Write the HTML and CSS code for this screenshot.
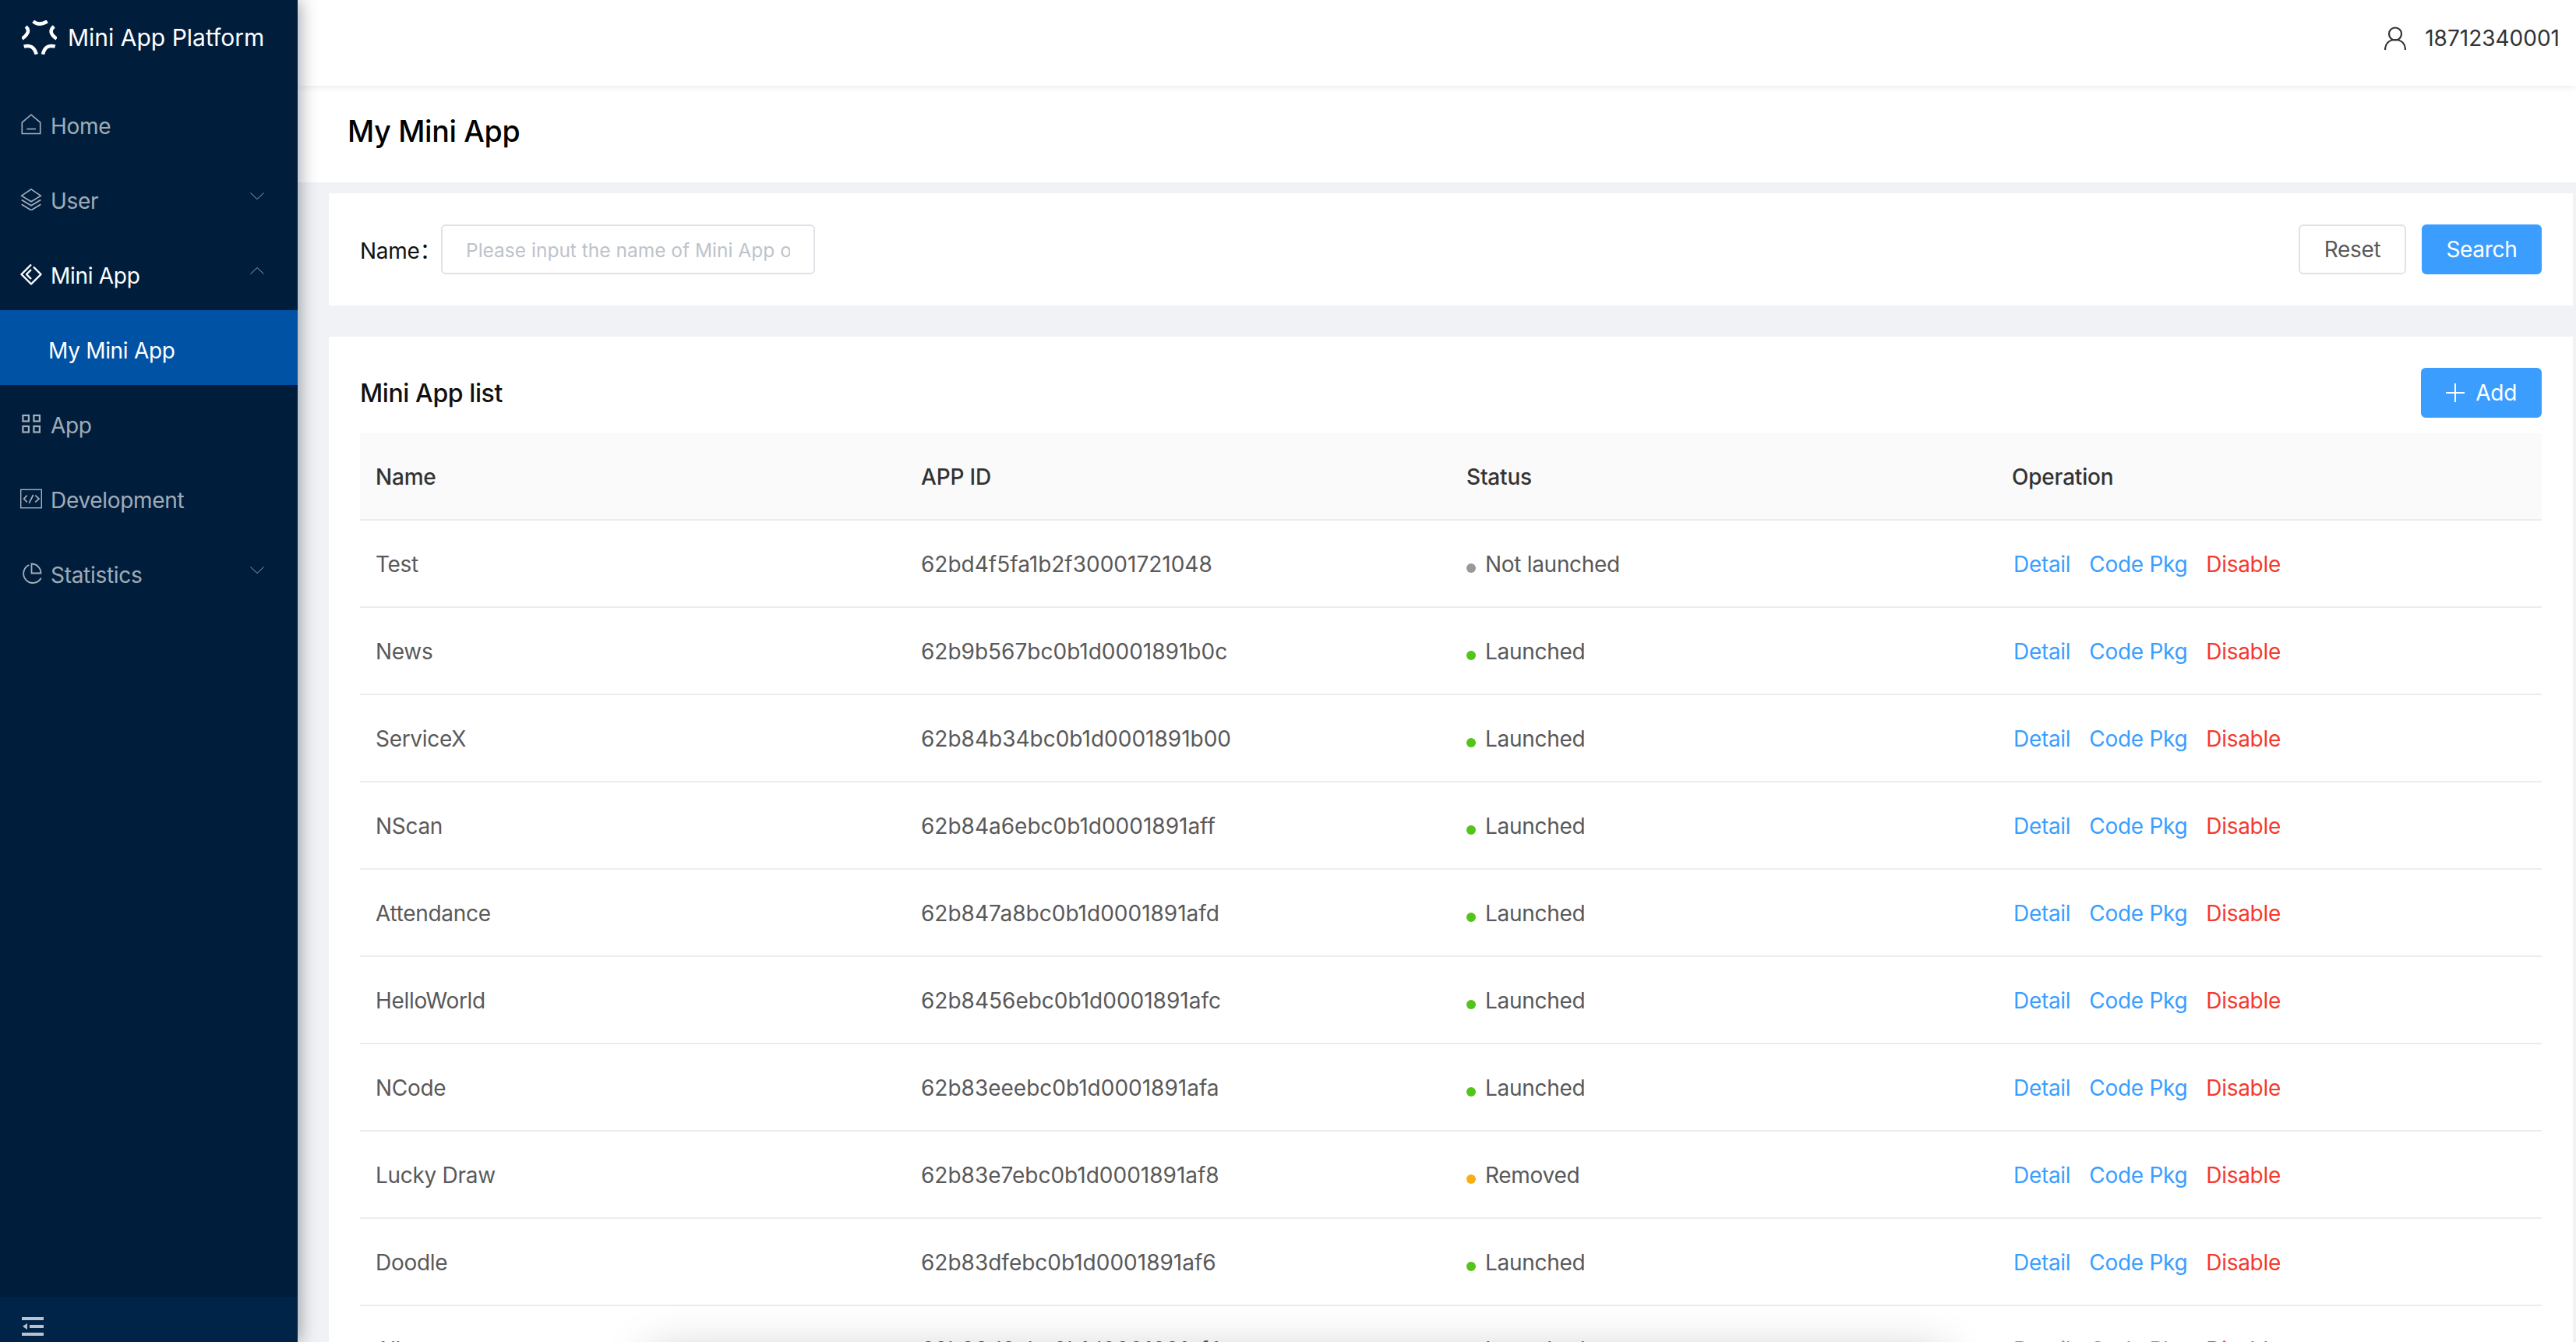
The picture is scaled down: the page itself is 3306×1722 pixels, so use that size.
FILE: index.html
```html
<!DOCTYPE html>
<html lang="en">
<head>
<meta charset="utf-8">
<title>Mini App Platform</title>
<link rel="stylesheet" href="styles.css">
</head>
<body>
<div class="app">
  <aside class="sider">
    <div class="logo">
      <svg class="logo-icon" viewBox="0 0 45 44" fill="none" stroke="#fff" stroke-width="4.500"><path d="M14.700 1.300Q22 8 32.700 1.300"/><path d="M41.300 8Q32.500 15 44.700 23.700"/><path d="M5.300 8Q12.500 15 .3 23.700"/><path d="M2.700 33.700Q15 30 18.700 43.700"/><path d="M42.700 33.700Q30 30 27 43.700"/></svg>
      <span>Mini App Platform</span>
    </div>
    <nav class="menu">
      <a class="item"><svg class="ic" viewBox="0 0 28 28" fill="none" stroke="currentColor" stroke-width="1.600"><path d="M2.300 25.500V11.200L14 1.200l11.700 10v14.300z"/><path d="M8.300 19.500H20"/></svg><span class="label">Home</span></a>
      <a class="item"><svg class="ic" viewBox="0 0 28 28" fill="none" stroke="currentColor" stroke-width="1.600"><path d="M14 .8 26.300 9.200 14 16.800 1.700 9.200z"/><path d="M1.700 14.500 14 21.800l12.300-7.300"/><path d="M1.700 20.200 14 27.800l12.300-7.600"/></svg><span class="label">User</span><svg class="chev" viewBox="0 0 18 9" fill="none" stroke="currentColor" stroke-width="1"><path d="M.5.5 9 8.500 17.500.5"/></svg></a>
      <a class="item open"><svg class="ic" viewBox="0 0 28 28" fill="none" stroke="currentColor" stroke-width="2.400" stroke-linejoin="round"><path d="M14 1.500 1.500 14 14 26.500 26.500 14 17 4.500"/><path d="M14 8 8 14l6 6"/></svg><span class="label">Mini App</span><svg class="chev" viewBox="0 0 18 9" fill="none" stroke="currentColor" stroke-width="1"><path d="M.5 8.500 9 .5l8.500 8"/></svg></a>
      <a class="item sub"><span class="label">My Mini App</span></a>
      <a class="item"><svg class="ic" viewBox="0 0 28 28" fill="none" stroke="currentColor" stroke-width="2.200"><rect x="3.400" y="3" width="7.500" height="7.500"/><rect x="17.400" y="3" width="7.500" height="7.500"/><rect x="3.400" y="17" width="7.500" height="7.500"/><rect x="17.400" y="17" width="7.500" height="7.500"/></svg><span class="label">App</span></a>
      <a class="item"><svg class="ic" viewBox="0 0 28 28" fill="none" stroke="currentColor" stroke-width="1.400"><rect x=".7" y="2.300" width="26.600" height="23.400"/><path d="M8.700 9.600 4.700 14l4 4.300M19.300 9.600l4.700 4.400-4.700 4.300M16.700 9l-5.400 10.700" stroke-width="1.700"/></svg><span class="label">Development</span></a>
      <a class="item"><svg class="ic" viewBox="0 0 28 28" fill="none" stroke="currentColor" stroke-width="1.800"><path d="M11.300 3A12 12 0 1 0 26.700 19.700"/><path d="M14.500 1.500V13.500H26.500A12 12 0 0 0 14.500 1.500z"/></svg><span class="label">Statistics</span><svg class="chev" viewBox="0 0 18 9" fill="none" stroke="currentColor" stroke-width="1"><path d="M.5.5 9 8.500 17.500.5"/></svg></a>
    </nav>
    <div class="collapse">
      <svg class="collapse-ic" viewBox="0 0 28 24" fill="#b9c2ce"><rect width="28" height="4"/><rect x="10" y="10" width="18" height="4"/><path d="M7 8v8l-6-4z"/><rect y="20" width="28" height="4"/></svg>
    </div>
  </aside>
  <div class="main">
    <header class="topbar">
      <svg class="user-ic" viewBox="0 0 28 30" fill="none" stroke="#333" stroke-width="2.200"><circle cx="14" cy="9.500" r="8"/><path d="M1 30c0-8 5-13 13-13s13 5 13 13"/></svg>
      <span class="phone">18712340001</span>
    </header>
    <div class="page-head"><h1>My Mini App</h1></div>
    <div class="content">
      <section class="card search">
        <label class="field-label">Name：</label>
        <input class="input" placeholder="Please input the name of Mini App or APP ID">
        <div class="grow"></div>
        <button class="btn reset">Reset</button>
        <button class="btn primary">Search</button>
      </section>
      <section class="card list">
        <div class="list-head">
          <h2>Mini App list</h2>
          <button class="btn primary add"><svg class="plus" viewBox="0 0 24 24" fill="none" stroke="#fff" stroke-width="2"><path d="M12 0v24M0 12h24"/></svg>Add</button>
        </div>
        <table class="table">
          <colgroup><col class="c"><col class="c"><col class="c"><col class="c"></colgroup>
          <thead><tr><th>Name</th><th>APP ID</th><th>Status</th><th>Operation</th></tr></thead>
          <tbody>
            <tr><td>Test</td><td class="id">62bd4f5fa1b2f30001721048</td><td><i class="dot gray"></i>Not launched</td><td class="ops"><a>Detail</a><a>Code Pkg</a><a class="danger">Disable</a></td></tr>
            <tr><td>News</td><td class="id">62b9b567bc0b1d0001891b0c</td><td><i class="dot green"></i>Launched</td><td class="ops"><a>Detail</a><a>Code Pkg</a><a class="danger">Disable</a></td></tr>
            <tr><td>ServiceX</td><td class="id">62b84b34bc0b1d0001891b00</td><td><i class="dot green"></i>Launched</td><td class="ops"><a>Detail</a><a>Code Pkg</a><a class="danger">Disable</a></td></tr>
            <tr><td>NScan</td><td class="id">62b84a6ebc0b1d0001891aff</td><td><i class="dot green"></i>Launched</td><td class="ops"><a>Detail</a><a>Code Pkg</a><a class="danger">Disable</a></td></tr>
            <tr><td>Attendance</td><td class="id">62b847a8bc0b1d0001891afd</td><td><i class="dot green"></i>Launched</td><td class="ops"><a>Detail</a><a>Code Pkg</a><a class="danger">Disable</a></td></tr>
            <tr><td>HelloWorld</td><td class="id">62b8456ebc0b1d0001891afc</td><td><i class="dot green"></i>Launched</td><td class="ops"><a>Detail</a><a>Code Pkg</a><a class="danger">Disable</a></td></tr>
            <tr><td>NCode</td><td class="id">62b83eeebc0b1d0001891afa</td><td><i class="dot green"></i>Launched</td><td class="ops"><a>Detail</a><a>Code Pkg</a><a class="danger">Disable</a></td></tr>
            <tr><td>Lucky Draw</td><td class="id">62b83e7ebc0b1d0001891af8</td><td><i class="dot orange"></i>Removed</td><td class="ops"><a>Detail</a><a>Code Pkg</a><a class="danger">Disable</a></td></tr>
            <tr><td>Doodle</td><td class="id">62b83dfebc0b1d0001891af6</td><td><i class="dot green"></i>Launched</td><td class="ops"><a>Detail</a><a>Code Pkg</a><a class="danger">Disable</a></td></tr>
            <tr><td>Album</td><td class="id">62b83d6cbc0b1d0001891af4</td><td><i class="dot green"></i>Launched</td><td class="ops"><a>Detail</a><a>Code Pkg</a><a class="danger">Disable</a></td></tr>
          </tbody>
        </table>
      </section>
    </div>
  </div>
  <div class="bottom-shade"></div>
</div>
</body>
</html>
```
FILE: styles.css
```css
* { box-sizing: border-box; }
html, body { margin: 0; height: 100%; overflow: hidden; }
body { font-family: Inter, "Noto Sans CJK SC", "Liberation Sans", sans-serif; font-size: 28px; letter-spacing: -.3px; color: #595959; background: #f0f2f5; }
.app { position: relative; display: flex; height: 1722px; overflow: hidden; }

.sider { width: 382px; flex: none; display: flex; flex-direction: column; background: #001e3c; box-shadow: 4px 0 20px rgba(0, 21, 41, .35); position: relative; z-index: 2; }
.logo { height: 96px; flex: none; display: flex; align-items: center; gap: 14px; padding-left: 28px; color: #fff; font-size: 30px; letter-spacing: 0; }
.logo-icon { width: 45px; height: 44px; flex: none; }
.menu { flex: 1; padding-top: 14px; }
.item { height: 96px; display: flex; align-items: center; padding: 0 43px 0 26px; color: rgba(255, 255, 255, .65); }
.ic { width: 28px; height: 28px; flex: none; margin: 3px 11px 0 0; }
.label { flex: 1; padding-top: 8px; }
.chev { width: 18px; height: 9px; flex: none; margin-top: -5px; color: rgba(255, 255, 255, .6); }
.item.open { color: #fff; }
.item.sub { background: #0052a5; color: #fff; padding-left: 62px; }
.collapse { height: 58px; flex: none; background: #002447; display: flex; align-items: center; padding-left: 28px; }
.collapse-ic { width: 28px; height: 24px; margin-top: 18px; }

.main { flex: 1; min-width: 0; display: flex; flex-direction: column; }
.topbar { height: 110px; flex: none; padding: 0 21px 12px 0; background: #fff; display: flex; align-items: center; justify-content: flex-end; color: #333; box-shadow: 0 2px 8px rgba(0, 21, 41, .08); position: relative; z-index: 1; }
.user-ic { width: 28px; height: 30px; margin-right: 24px; }
.phone { letter-spacing: 0; }
.page-head { height: 124px; flex: none; padding: 0 0 8px 64px; background: #fff; display: flex; align-items: center; }
h1 { margin: 0; font-size: 37.500px; font-weight: 500; color: #000; }
.content { flex: 1; padding: 14px 4px 0 40px; display: flex; flex-direction: column; gap: 40px; }
.card { background: #fff; padding: 0 40px; }
.search { height: 144px; flex: none; display: flex; align-items: center; }
.field-label { width: 104px; flex: none; color: #111; }
.input { width: 480px; height: 64px; border: 2px solid #dfe3e8; border-radius: 6px; padding: 0 30px; font: inherit; color: #595959; outline: none; }
.input::placeholder { color: #bdc3ca; opacity: 1; font-size: 24.500px; }
.grow { flex: 1; }
.btn { height: 64px; padding: 0 30px; border: 2px solid #dfe3e8; border-radius: 6px; background: #fff; font: inherit; letter-spacing: inherit; color: #595959; }
.btn.reset { padding: 0 30.500px; }
.btn.primary { background: #3b9eff; border-color: #3b9eff; color: #fff; margin-left: 20px; padding: 0 29.500px; }
.list { flex: 1; }
.list-head { height: 124px; padding-top: 40px; display: flex; align-items: flex-start; justify-content: space-between; }
h2 { margin: 0; line-height: 66px; font-size: 32px; font-weight: 500; letter-spacing: -.4px; color: #111; }
.btn.add { margin-left: 0; padding: 0 30px; display: flex; align-items: center; gap: 14px; }
.plus { width: 24px; height: 24px; }
.table { width: 100%; border-collapse: separate; border-spacing: 0; table-layout: fixed; }
.c { width: 25%; }
th { height: 112px; padding: 2px 20px 0; background: #fafafa; font-weight: 500; letter-spacing: -.2px; color: #333; text-align: left; border-bottom: 2px solid #e9edf2; }
td { height: 112px; padding: 2px 20px 0; border-bottom: 2px solid #e9edf2; }
.id { letter-spacing: 0; }
.dot { display: inline-block; width: 12px; height: 12px; border-radius: 50%; margin-right: 12px; vertical-align: -1px; }
.gray { background: #999; }
.green { background: #52c41a; }
.orange { background: #faad14; }
.ops a { color: #3b9eff; margin-right: 24px; }
.ops a:first-child { margin-left: 2px; }
.ops a.danger { color: #f5392b; }
.bottom-shade { position: absolute; left: 833px; width: 1662px; top: 1735px; height: 60px; box-shadow: 0 0 60px rgba(0, 0, 0, .22); pointer-events: none; z-index: 3; }
```
